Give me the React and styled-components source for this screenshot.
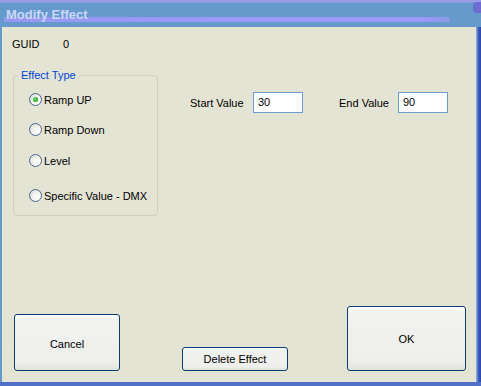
import React from 'react';
import styled, { createGlobalStyle } from 'styled-components';

const Global = createGlobalStyle`
    html, body {
        margin: 0;
        padding: 0;
        background: #ffffff;
    }
    body {
        font-family: "Liberation Sans", Arial, sans-serif;
        font-size: 11px;
        color: #000;
    }
`;

const Window = styled.div`
    width: 481px;
    height: 386px;
    display: flex;
    flex-direction: column;
    background: #6699cc;
    overflow: hidden;
`;

const TitleBar = styled.div`
    position: relative;
    height: 27px;
    flex: none;
    background: linear-gradient(#9a9ae8 0, #9a9ae8 2px, #6699cc 3px, #6699cc 100%);
    .band {
        position: absolute;
        left: 4px;
        top: 17px;
        width: 446px;
        height: 5px;
        background: linear-gradient(90deg, #9999f4 0, #9999f8 95%, #8a9ae0 100%);
        border-radius: 2px;
    }
    .corner {
        position: absolute;
        right: 0;
        top: 2px;
        width: 8px;
        height: 11px;
        background: #6c6cd0;
        border-radius: 4px 0 0 4px;
    }
    span {
        position: relative;
        display: block;
        padding: 7px 0 0 6px;
        font-weight: bold;
        font-size: 13px;
        color: #cad8fb;
    }
`;

const Frame = styled.div`
    flex: 1;
    display: flex;
    padding: 0 5px 4px 2px;
    background: linear-gradient(90deg, #6699cc 0, #6699cc 476px, #7fa6d8 476px, #7fa6d8 477px, #3f5fc0 478px, #2c45a8 481px);
    box-shadow: inset 0 -4px 0 #5170c8;
`;

const Body = styled.div`
    flex: 1;
    display: flex;
    flex-direction: column;
    background: #e4e4d4;
    padding: 11px 10px 11px 12px;
`;

const InfoRow = styled.div`
    display: flex;
    height: 13px;
    line-height: 13px;
    span:first-child {
        width: 51px;
        margin-left: -2px;
    }
`;

const MainRow = styled.div`
    display: flex;
    margin-top: 24px;
`;

const Group = styled.div`
    position: relative;
    margin-left: -1px;
    border: 1px solid #d0d0bf;
    border-radius: 4px;
    padding: 17px 0 0 15px;
    width: 128px;
    height: 122px;
`;

const Legend = styled.div`
    position: absolute;
    left: 4px;
    top: -7px;
    padding: 0 3px;
    background: #e4e4d4;
    color: #0046d5;
    line-height: 13px;
`;

const Option = styled.label`
    display: flex;
    align-items: center;
    height: 13px;
    margin-top: ${p => p.$mt || 0}px;
    gap: 2px;
    white-space: nowrap;
`;

const Radio = styled.span`
    position: relative;
    width: 11px;
    height: 11px;
    flex: none;
    border: 1px solid #4a6590;
    border-radius: 50%;
    background: radial-gradient(circle at 70% 70%, #ffffff 0, #f4f4f0 40%, #d6d6ce 100%);
    &::after {
        content: '';
        display: ${p => (p.$checked ? 'block' : 'none')};
        position: absolute;
        left: 3px;
        top: 3px;
        width: 5px;
        height: 5px;
        border-radius: 50%;
        background: radial-gradient(circle at 40% 40%, #6fe06f 0, #21a121 70%);
    }
`;

const Fields = styled.div`
    display: flex;
    align-items: center;
    height: 21px;
    margin: 17px 0 0 32px;
`;

const FieldLabel = styled.span`
    width: ${p => p.$w}px;
    white-space: nowrap;
`;

const Input = styled.div`
    width: 44px;
    height: 19px;
    line-height: 19px;
    padding-left: 4px;
    margin-right: ${p => p.$mr || 0}px;
    border: 1px solid #6b9bd0;
    background: #ffffff;
`;

const ButtonRow = styled.div`
    margin-top: auto;
    display: flex;
    align-items: flex-end;
`;

const Button = styled.div`
    width: ${p => p.$w}px;
    height: ${p => p.$h}px;
    margin-left: ${p => p.$ml || 0}px;
    box-sizing: border-box;
    display: flex;
    align-items: center;
    justify-content: center;
    border: 1px solid #0a3d73;
    border-radius: 3px;
    background: linear-gradient(#ffffff 0, #f2f2f0 8%, #efefec 85%, #e2e2dc 100%);
    font-size: 11px;
    padding-top: ${p => p.$pt || 0}px;
`;

export default function App() {
    return (
        <>
            <Global />
            <Window>
                <TitleBar>
                    <div className='band' />
                    <div className='corner' />
                    <span>Modify Effect</span>
                </TitleBar>
                <Frame>
                    <Body>
                        <InfoRow>
                            <span>GUID</span>
                            <span>0</span>
                        </InfoRow>
                        <MainRow>
                            <Group>
                                <Legend>Effect Type</Legend>
                                <Option>
                                    <Radio $checked />
                                    Ramp UP
                                </Option>
                                <Option $mt={17}>
                                    <Radio />
                                    Ramp Down
                                </Option>
                                <Option $mt={18}>
                                    <Radio />
                                    Level
                                </Option>
                                <Option $mt={22}>
                                    <Radio />
                                    Specific Value - DMX
                                </Option>
                            </Group>
                            <Fields>
                                <FieldLabel $w={63}>Start Value</FieldLabel>
                                <Input $mr={36}>30</Input>
                                <FieldLabel $w={59}>End Value</FieldLabel>
                                <Input>90</Input>
                            </Fields>
                        </MainRow>
                        <ButtonRow>
                            <Button $w={106} $h={57} $pt={2}>Cancel</Button>
                            <Button $w={106} $h={24} $ml={62}>Delete Effect</Button>
                            <Button $w={119} $h={65} $ml={59}>OK</Button>
                        </ButtonRow>
                    </Body>
                </Frame>
            </Window>
        </>
    );
}
